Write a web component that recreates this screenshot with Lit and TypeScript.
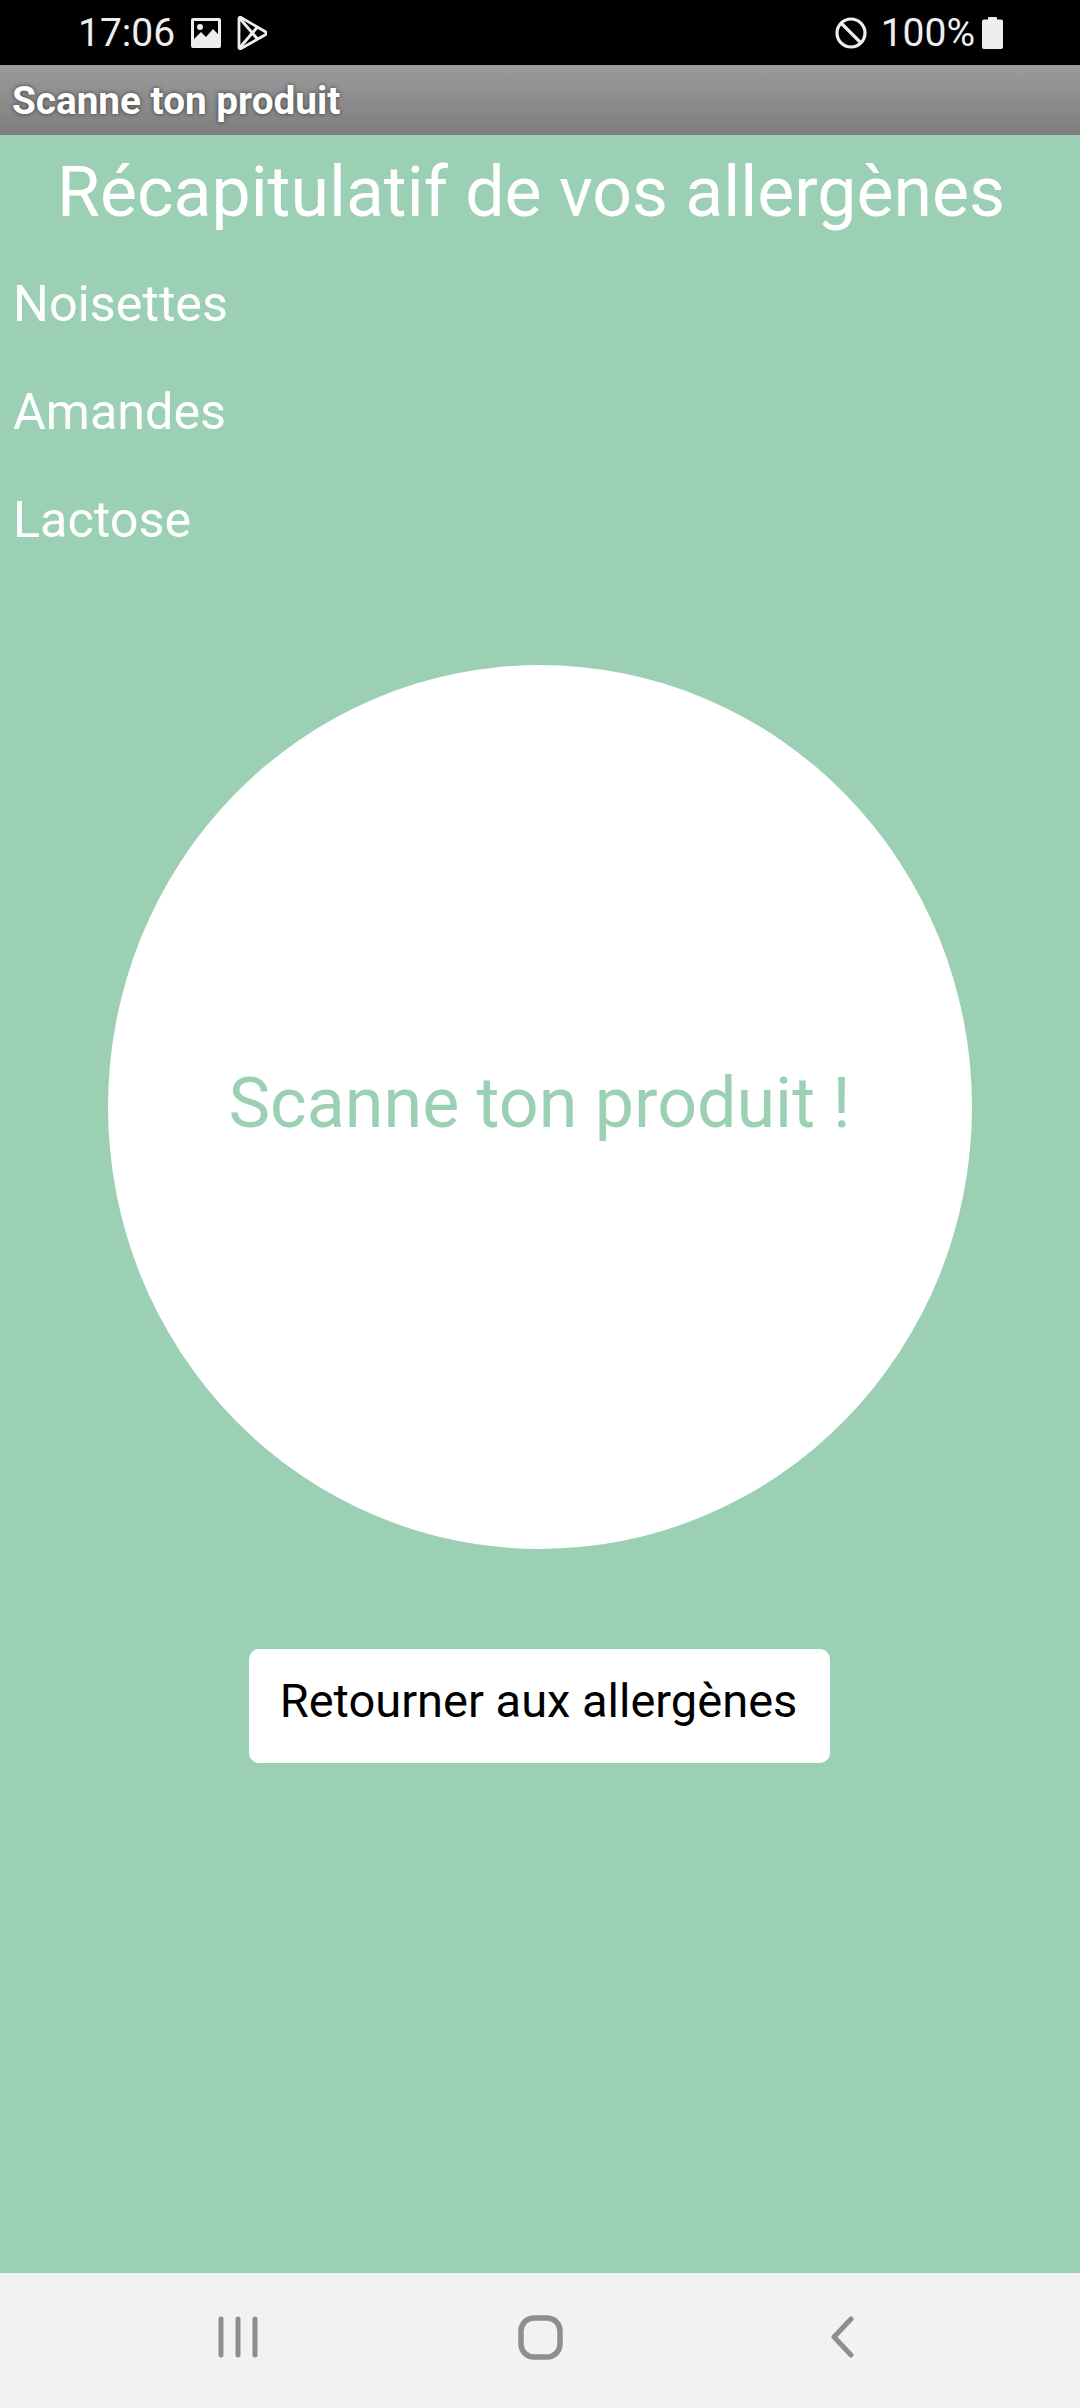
import { LitElement, html, css } from "lit";
import { customElement } from "lit/decorators.js";

@customElement("app-root")
export class AppRoot extends LitElement {
  static styles = css`
    :host { display: flex; flex-direction: column; width: 1080px; height: 2408px; font-family: Roboto, sans-serif; overflow: hidden; }
    .status { height: 65px; background: #000; color: #eee; display: flex; align-items: center; flex: none; box-sizing: border-box; padding: 0 77px 0 78px; font-size: 39px; }
    .status svg { display: block; flex: none; }
    .time { margin-right: 16px; }
    .pic { margin-right: 16px; }
    .gap { flex: 1; }
    .pct { margin: 0 7px 0 14px; }
    .bar { height: 70px; flex: none; background: linear-gradient(#9b9b9b, #7e7e7e); color: #fff; font-weight: 700; font-size: 38.700px; line-height: 72px; padding-left: 12px; text-shadow: 0 0 4px rgba(0,0,0,.6); }
    .main { flex: 1; background: #9cd0b5; color: #fff; display: flex; flex-direction: column; }
    h1 { margin: 0; font-weight: 400; font-size: 69.800px; line-height: 82px; text-align: center; padding: 16px 18px 0 0; }
    .list { display: flex; flex-direction: column; gap: 50px; padding: 42px 0 0 13px; }
    .item { font-size: 50.300px; line-height: 58px; }
    .circle { align-self: center; margin-top: 116px; margin-right: 1px; width: 864px; height: 884px; border-radius: 50%; background: #fff; color: #9cd0b5; display: flex; align-items: center; justify-content: center; font-size: 70px; padding-bottom: 9px; box-sizing: border-box; }
    .btn { align-self: center; margin-top: 100px; width: 581px; height: 114px; border-radius: 10px; background: #fff; color: #000; display: flex; align-items: center; justify-content: center; font-size: 47px; padding: 0 2px 11px 0; box-sizing: border-box; margin-right: 1px; }
    .nav { height: 135px; flex: none; box-sizing: border-box; background: #f2f2f2; display: flex; align-items: center; gap: 260px; padding: 0 0 7px 218px; }
    .nav svg { display: block; fill: none; stroke: #8e8e8e; stroke-linecap: round; stroke-linejoin: round; }
    .back { margin-left: 8px; }
  `;

  render() {
    return html`
      <div class="status">
        <span class="time">17:06</span>
        <svg class="pic" width="30" height="30" viewBox="0 0 30 30">
          <path fill="#eee" fill-rule="evenodd" d="M2 0h26a2 2 0 0 1 2 2v26a2 2 0 0 1-2 2H2a2 2 0 0 1-2-2V2a2 2 0 0 1 2-2zM3 3v18l7-7 5 5 7-8 5 5V3z"/>
          <circle cx="9" cy="9" r="3" fill="#eee"/>
        </svg>
        <svg width="30" height="34" viewBox="0 0 30 34" fill="none" stroke="#eee" stroke-width="2.800" stroke-linejoin="round">
          <path d="M2 2.500c0-1 1-1.500 2-1L28 15.500c1.500 1 1.500 2.500 0 3.500L4 32.500c-1 .5-2 0-2-1z"/>
          <path d="M2.500 2l18 21M2.500 32l18-21"/>
        </svg>
        <span class="gap"></span>
        <svg width="32" height="32" viewBox="0 0 32 32" fill="none" stroke="#eee" stroke-width="3.200">
          <circle cx="16" cy="16" r="14"/><path d="M6 6l20 20"/>
        </svg>
        <span class="pct">100%</span>
        <svg width="21" height="32" viewBox="0 0 21 32">
          <path fill="#eee" d="M6 2.500V1a1 1 0 0 1 1-1h7a1 1 0 0 1 1 1v1.500h4a2 2 0 0 1 2 2V30a2 2 0 0 1-2 2H2a2 2 0 0 1-2-2V4.500a2 2 0 0 1 2-2z"/>
        </svg>
      </div>
      <div class="bar">Scanne ton produit</div>
      <div class="main">
        <h1>Récapitulatif de vos allergènes</h1>
        <div class="list">
          <div class="item">Noisettes</div>
          <div class="item">Amandes</div>
          <div class="item">Lactose</div>
        </div>
        <div class="circle">Scanne ton produit !</div>
        <div class="btn">Retourner aux allergènes</div>
      </div>
      <div class="nav">
        <svg width="40" height="42" viewBox="0 0 40 42" stroke-width="5">
          <path d="M3 3v36M20 3v36M37 3v36"/>
        </svg>
        <svg width="45" height="45" viewBox="0 0 45 45" stroke-width="5.500">
          <rect x="3" y="3" width="39" height="39" rx="13"/>
        </svg>
        <svg class="back" width="23" height="42" viewBox="0 0 23 42" stroke-width="5">
          <path d="M20 3L3 21l17 18"/>
        </svg>
      </div>
    `;
  }
}
